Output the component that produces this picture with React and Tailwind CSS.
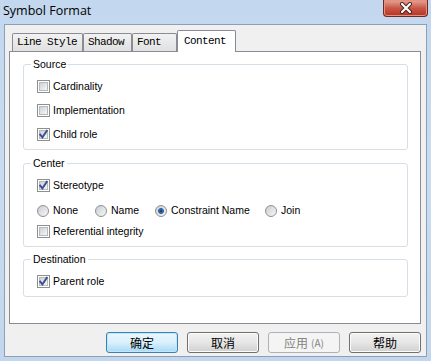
import React from "react";

const sans = { fontFamily: '"Liberation Sans", Arial, sans-serif' };
const mono = { fontFamily: '"Liberation Mono", "Courier New", monospace' };
const cjk = { fontFamily: '"Noto Sans CJK SC", "Liberation Sans", sans-serif' };

function Check({ checked, label }) {
  return (
    <div className="flex h-[13px] items-center">
      <span className="flex h-[13px] w-[13px] shrink-0 items-center justify-center border border-[#8e8f8f] bg-white">
        <span className="relative flex h-[9px] w-[9px] items-center justify-center border border-[#b5bac0] bg-gradient-to-br from-[#cdd1d6] to-[#f7f7f7]">
          {checked && (
            <svg
              width="11"
              height="11"
              viewBox="0 0 11 11"
              className="absolute left-[-2px] top-[-2px]"
            >
              <path
                d="M2.2 5.6 L4.4 8.3 L8.8 1.8"
                fill="none"
                stroke="#3a4f8c"
                strokeWidth="1.9"
                strokeLinecap="square"
              />
            </svg>
          )}
        </span>
      </span>
      <span className="ml-[3px] text-[10.5px] leading-none text-black">{label}</span>
    </div>
  );
}

function Radio({ checked, label }) {
  return (
    <div className="flex h-[13px] items-center">
      <span className="flex h-[12px] w-[12px] shrink-0 items-center justify-center rounded-full border border-[#8e8f8f] bg-gradient-to-br from-[#c9cdd2] to-[#f8f8f8]">
        {checked && (
          <span className="h-[6px] w-[6px] rounded-full border border-[#1c4f8e] bg-[radial-gradient(circle,#0d2c5c_0%,#2b6cb3_55%,#7fbdf0_100%)]" />
        )}
      </span>
      <span className="ml-[4px] text-[10.5px] leading-none text-black">{label}</span>
    </div>
  );
}

function Group({ label, height, children, className }) {
  return (
    <div
      className={`relative rounded-[3px] border border-[#d5dfe5] ${className || ""}`}
      style={{ height }}
    >
      <span className="absolute left-[7px] top-[-7px] bg-white px-[2px] text-[10.5px] leading-[13px] text-black">
        {label}
      </span>
      {children}
    </div>
  );
}

function Tab({ label, width, active }) {
  if (active) {
    return (
      <div
        className="relative z-10 mb-[-1px] flex h-[22px] items-start rounded-t-[2px] border border-b-0 border-[#898c95] bg-white pl-[6px] pt-[4px] text-[11px] leading-[13px] tracking-[-0.6px] text-black"
        style={{ ...mono, width }}
      >
        {label}
      </div>
    );
  }
  return (
    <div
      className="flex h-[18px] items-center rounded-t-[2px] border border-b-0 border-[#898c95] bg-gradient-to-b from-[#f2f2f2] to-[#e0e0e0] pl-[4px] text-[11px] leading-none tracking-[-0.6px] text-black"
      style={{ ...mono, width }}
    >
      {label}
    </div>
  );
}

function Btn({ children, primary, disabled }) {
  let cls =
    "flex h-[21px] w-[72px] items-center justify-center rounded-[3px] border text-[12px] leading-none";
  if (primary) {
    cls += " border-[#3c7fb1] bg-gradient-to-b from-[#eaf6fd] via-[#d9f0fc] to-[#a7d9f5] text-black shadow-[inset_0_0_0_1px_#bfe8ff]";
  } else if (disabled) {
    cls += " border-[#adb2b5] bg-[#f4f4f4] text-[#838383]";
  } else {
    cls += " border-[#707070] bg-gradient-to-b from-[#f2f2f2] via-[#e6e6e6] to-[#d0d0d0] text-black shadow-[inset_0_0_0_1px_#fcfcfc]";
  }
  return (
    <div className={cls} style={cjk}>
      {children}
    </div>
  );
}

export default function App() {
  return (
    <div
      className="flex h-[361px] w-[431px] flex-col bg-gradient-to-b from-[#c3d7ee] via-[#c9dcf1] to-[#c2d6ed]"
      style={sans}
    >
      {/* Title bar */}
      <div className="flex h-[24px] shrink-0 items-start justify-between">
        <span
          className="pl-[3px] pt-[2px] text-[12.5px] leading-[17px] text-black"
          style={{ fontFamily: '"Open Sans", "Noto Sans", sans-serif' }}
        >
          Symbol Format
        </span>
        <div className="mr-[3px] flex h-[17px] w-[45px] items-center justify-center rounded-b-[4px] border border-t-0 border-[#6b2a22] bg-gradient-to-b from-[#e3a796] via-[#c9584a] to-[#b5321f] shadow-[inset_0_0_0_1px_#e8907d]">
          <svg width="14" height="12" viewBox="0 0 14 12">
            <path
              d="M3 2 L11 10 M11 2 L3 10"
              stroke="#47201b"
              strokeWidth="4"
              strokeLinecap="round"
            />
            <path
              d="M3 2 L11 10 M11 2 L3 10"
              stroke="#ffffff"
              strokeWidth="2.2"
              strokeLinecap="round"
            />
          </svg>
        </div>
      </div>

      {/* Client area */}
      <div className="mx-[4px] flex flex-1 flex-col border border-b-0 border-[#8b9fb8] bg-[#f0f0f0] pb-[3px]">
        <div className="pl-[4px] pr-[5px] pt-[5px]">
          <div className="flex items-end pl-[3px]">
            <Tab label="Line Style" width={71} />
            <Tab label="Shadow" width={49} />
            <Tab label="Font" width={45} />
            <Tab label="Content" width={59} active />
          </div>
          <div className="flex h-[273px] flex-col border border-[#898c95] bg-white pl-[13px] pr-[12px] pt-[12px]">
            <Group label="Source" height={86}>
              <div className="flex flex-col gap-[11px] pl-[13px] pt-[15px]">
                <Check label="Cardinality" />
                <Check label="Implementation" />
                <Check label="Child role" checked />
              </div>
            </Group>
            <Group label="Center" height={84} className="mt-[13px]">
              <div className="flex flex-col pl-[13px] pt-[15px]">
                <Check label="Stereotype" checked />
                <div className="mt-[12px] flex">
                  <div className="w-[58px]">
                    <Radio label="None" />
                  </div>
                  <div className="w-[60px]">
                    <Radio label="Name" />
                  </div>
                  <div className="w-[110px]">
                    <Radio label="Constraint Name" checked />
                  </div>
                  <Radio label="Join" />
                </div>
                <div className="mt-[8px]">
                  <Check label="Referential integrity" />
                </div>
              </div>
            </Group>
            <Group label="Destination" height={38} className="mt-[12px]">
              <div className="pl-[13px] pt-[15px]">
                <Check label="Parent role" checked />
              </div>
            </Group>
          </div>
        </div>

        <div className="mt-[8px] flex justify-end gap-[9px] pr-[5px]">
          <Btn primary>确定</Btn>
          <Btn>取消</Btn>
          <Btn disabled>
            应用<span className="ml-[3px] text-[10px]">(A)</span>
          </Btn>
          <Btn>帮助</Btn>
        </div>
      </div>
      <div className="mx-[4px] h-[5px] shrink-0 border-t border-[#8b9fb8]" />
    </div>
  );
}
